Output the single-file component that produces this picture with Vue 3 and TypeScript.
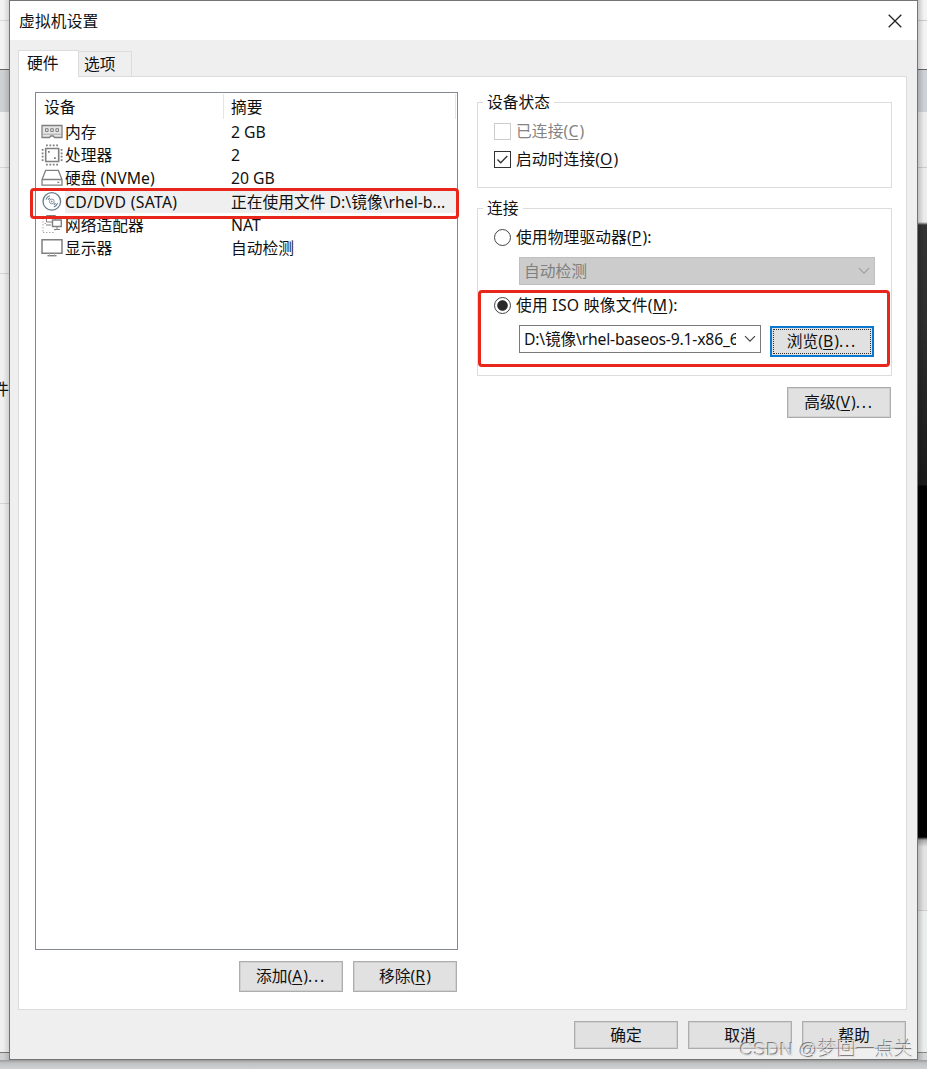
<script setup lang="ts">
import { ref } from 'vue'

type IconName = 'memory' | 'cpu' | 'disk' | 'disc' | 'network' | 'display'
interface Device {
  icon: IconName
  name: string
  summary: string
}

const devices: Device[] = [
  { icon: 'memory', name: '内存', summary: '2 GB' },
  { icon: 'cpu', name: '处理器', summary: '2' },
  { icon: 'disk', name: '硬盘 (NVMe)', summary: '20 GB' },
  { icon: 'disc', name: 'CD/DVD (SATA)', summary: '正在使用文件 D:\\镜像\\rhel-b...' },
  { icon: 'network', name: '网络适配器', summary: 'NAT' },
  { icon: 'display', name: '显示器', summary: '自动检测' },
]
const selected = ref<IconName>('disc')
</script>

<template>
  <div class="desktop">
    <div class="edge edge-left"><span class="behind">件</span></div>
    <main class="window">
      <header class="titlebar">
        <span>虚拟机设置</span>
        <svg class="close" width="14" height="14" viewBox="0 0 14 14"><path d="M.7.7l12.6 12.6M13.3.7L.7 13.3" /></svg>
      </header>
      <nav class="tabs">
        <div class="tab active">硬件</div>
        <div class="tab">选项</div>
      </nav>
      <section class="panel">
        <div class="left">
          <div class="list">
            <div class="row head"><span class="c1">设备</span><span class="c2">摘要</span></div>
            <div
              v-for="d in devices"
              :key="d.icon"
              class="row"
              :class="{ selected: selected === d.icon }"
              @click="selected = d.icon"
            >
              <svg class="icon" width="22" height="22" viewBox="0 0 22 22">
                <g v-if="d.icon === 'memory'">
                  <path d="M1 4.5h20v12h-7.5l-1.2-1.5H9.7l-1.2 1.5H1z" fill="#e6e6e6" stroke-width="1.3" />
                  <path d="M4.5 7.7h2.6v2.8H4.5zM9.7 7.7h2.6v2.8H9.7zM14.9 7.7h2.6v2.8h-2.6z" />
                  <path d="M1 13.2h20" stroke="#aaa" />
                </g>
                <g v-else-if="d.icon === 'cpu'">
                  <path d="M4.7 4.5h13v13h-13z" stroke-width="1.6" />
                  <path d="M5 1.4h12.5M5 20.6h12.5" stroke-width="1.8" stroke-dasharray="1.8 1.6" />
                  <path d="M1.6 5v12.5M20.6 5v12.5" stroke-width="1.8" stroke-dasharray="1.8 1.6" />
                  <path d="M7 7.8h1.8M13 14.2h1.8" stroke-width="1.8" />
                </g>
                <g v-else-if="d.icon === 'disk'">
                  <path d="M4.6 3.4h12.8L21 12.5v5.6H1v-5.6zM1 12.5h20" stroke-width="1.3" />
                  <path d="M16.3 15.4h2" stroke-width="1.3" />
                </g>
                <g v-else-if="d.icon === 'disc'" class="blue">
                  <circle cx="10.8" cy="10.4" r="8.8" stroke-width="1.3" />
                  <circle cx="10.8" cy="10.4" r="2.4" stroke-width=".8" />
                  <circle cx="10.8" cy="10.4" r=".4" />
                  <path d="M5 8.6A6 6 0 0 1 8.8 4.8M7.2 8.8a4.4 4.4 0 0 1 1.6-1.8M16.6 12.2a6 6 0 0 1-3.8 3.8M14.4 12a4.4 4.4 0 0 1-1.6 1.8" stroke-width="1.1" />
                </g>
                <g v-else-if="d.icon === 'network'">
                  <path d="M5.5 1.5h9v6.5h-9z" />
                  <path d="M11.5 6h8.8v6.5h-8.8z" fill="#fff" stroke-width="1.4" />
                  <path d="M2 4v14.5M2 18.5h12M5 9.5H2M14 15v3" stroke="#aaa" stroke-dasharray="1.5 1.5" />
                  <path d="M16 12.5v3M13 15.5h6M5 11h5" />
                </g>
                <g v-else>
                  <path d="M1 2.8h20v13.4H1z" stroke-width="1.5" />
                  <path d="M6.5 18.7h9" stroke-width="1.4" />
                  <path d="M8.5 16.5v2M13.5 16.5v2" stroke="#bbb" />
                </g>
              </svg>
              <span class="c1">{{ d.name }}</span>
              <span class="c2">{{ d.summary }}</span>
            </div>
            <div class="mark mark-row"></div>
          </div>
          <div class="actions">
            <button>添加(<u>A</u>)<span class="dots">...</span></button>
            <button>移除(<u>R</u>)</button>
          </div>
        </div>
        <div class="right">
          <fieldset class="status">
            <legend>设备状态</legend>
            <label class="opt disabled"><i class="box"></i>已连接(<u>C</u>)</label>
            <label class="opt">
              <i class="box"><svg width="15" height="15" viewBox="0 0 15 15"><path d="M2.5 7.4l3.2 3.3 6.6-6.6" /></svg></i>启动时连接(<u>O</u>)
            </label>
          </fieldset>
          <fieldset class="connection">
            <legend>连接</legend>
            <label class="opt physical"><i class="radio"></i>使用物理驱动器(<u>P</u>):</label>
            <div class="combo off">
              <span>自动检测</span>
              <svg width="12" height="8" viewBox="0 0 12 8"><path d="M1 1.2l5 5 5-5" /></svg>
            </div>
            <label class="opt iso"><i class="radio on"></i>使用 ISO 映像文件(<u>M</u>):</label>
            <div class="file">
              <div class="combo">
                <span>D:\镜像\rhel-baseos-9.1-x86_64</span>
                <svg width="12" height="8" viewBox="0 0 12 8"><path d="M1 1.2l5 5 5-5" /></svg>
              </div>
              <button class="focus">浏览(<u>B</u>)<span class="dots">...</span></button>
            </div>
            <div class="mark mark-iso"></div>
          </fieldset>
          <button class="advanced">高级(<u>V</u>)<span class="dots">...</span></button>
        </div>
      </section>
      <footer class="footer">
        <button>确定</button>
        <button>取消</button>
        <button>帮助</button>
      </footer>
    </main>
    <div class="edge edge-right"></div>
    <div class="below"></div>
    <div class="watermark">CSDN @梦回一点关</div>
  </div>
</template>

<style>
html,
body {
  margin: 0;
  overflow: hidden;
}
</style>

<style scoped>
* {
  box-sizing: border-box;
}
.desktop {
  position: relative;
  width: 927px;
  height: 1069px;
  display: grid;
  grid-template-columns: 9px 909px 9px;
  grid-template-rows: 1060px 9px;
  overflow: hidden;
  font: 15.75px/20px 'Noto Sans', 'Noto Sans CJK SC', sans-serif;
  color: #111;
  white-space: nowrap;
}
.edge {
  overflow: hidden;
}
.edge-left {
  padding-top: 379px;
  background: linear-gradient(to right, transparent 3px, rgba(0, 0, 0, 0.13)),
    linear-gradient(#f3f3f3 20px, #d8d8d8 20px 21px, #f3f3f3 21px 69px, #666 69px 70px, #cfd0d1 70px 112px, #f0f0f0 112px 167px, #d4d4d4 167px 168px, #f0f0f0 168px 273px, #d4d4d4 273px 274px, #f0f0f0 274px 503px, #d4d4d4 503px 504px, #f0f0f0 504px 1052px, #777 1052px 1053px, #d0d1d3 1053px);
}
.behind {
  display: block;
  margin-left: -7px;
  font-size: 16px;
}
.edge-right {
  background: linear-gradient(to left, transparent 3px, rgba(0, 0, 0, 0.18)),
    linear-gradient(#f3f3f3 20px, #ccc 20px 21px, #f3f3f3 21px 69px, #666 69px 70px, #ced1d6 70px 112px, #ececec 112px 167px, #ccc 167px 168px, #ececec 168px 222px, #333 225px, #2e2e2e 320px, #191919 485px, #000 486px 837px, #aaa 840px, #e2e2e2 847px 910px, #ccc 910px 911px, #eceded 911px 1052px, #888 1052px 1053px, #d4d5d7 1053px);
}
.below {
  grid-column: 1 / 4;
  background: linear-gradient(#999, #c0c1c3 3px, #d0d1d3);
}
.window {
  border: 1px solid #747474;
  background: #efefef;
  display: flex;
  flex-direction: column;
}
.titlebar {
  height: 39px;
  background: #fff;
  display: flex;
  justify-content: space-between;
  align-items: center;
  padding: 0 15px 0 9px;
}
.titlebar span {
  letter-spacing: 0.15px;
}
.close {
  fill: none;
  stroke: #222;
  stroke-width: 1.3;
}
.tabs {
  height: 36px;
  padding-left: 8px;
  display: flex;
  align-items: flex-end;
}
.tab {
  width: 53px;
  height: 25px;
  border: 1px solid #dcdcdc;
  border-width: 1px 1px 0 0;
  padding: 2px 0 0 5px;
}
.tab.active {
  width: 61px;
  height: 27px;
  margin-bottom: -1px;
  border-width: 1px 1px 0 1px;
  background: #fff;
  padding: 2px 0 0 8px;
  z-index: 1;
}
.panel {
  margin-left: 8px;
  width: 889px;
  height: 934px;
  background: #fff;
  border: 1px solid #dcdcdc;
  display: flex;
  padding: 15px 0 0 16px;
}
.left {
  width: 423px;
}
.list {
  position: relative;
  height: 858px;
  border: 1px solid #828790;
}
.row {
  height: 23.3px;
  display: flex;
  align-items: center;
  padding-left: 5px;
}
.head {
  height: 27px;
  padding-left: 8px;
}
.head .c1,
.head .c2 {
  height: 25px;
  line-height: 27px;
  border-right: 1px solid #e5e5e5;
}
.head .c2 {
  flex: 1;
  margin-right: 1px;
}
.icon {
  flex: none;
  margin-right: 2px;
}
.icon g {
  fill: none;
  stroke: #808080;
}
.icon g.blue {
  stroke: #647d8e;
}
.row .c1 {
  width: 159px;
}
.row.head .c1 {
  width: 180px;
}
.c2 {
  padding-left: 7px;
}
.row.selected .c1,
.row.selected .c2 {
  background: #efefef;
  height: 23px;
  line-height: 24px;
}
.row.selected .c1 {
  letter-spacing: 0.3px;
}
.row.selected .c2 {
  flex: 1;
}
.mark {
  position: absolute;
  border: 3px solid #e8261c;
  border-radius: 4px;
}
.mark-row {
  left: -6px;
  top: 95px;
  width: 429px;
  height: 31px;
}
.actions {
  display: flex;
  justify-content: flex-end;
  gap: 10px;
  margin: 11px 1px 0 0;
}
button {
  appearance: none;
  width: 104px;
  height: 31px;
  padding: 0 0 1px;
  border: 1px solid #adadad;
  outline: 1px solid #d0d0d0;
  outline-offset: -2px;
  background: #e1e1e1;
  color: #111;
  font: inherit;
  display: block;
}
.dots {
  letter-spacing: 1.8px;
}
u {
  text-decoration-thickness: 1px;
  text-underline-offset: 2px;
  padding-right: 1px;
}
.right {
  width: 415px;
  margin-left: 19px;
}
fieldset {
  position: relative;
  margin: 0;
  padding: 0 0 0 16px;
  border: 1px solid #dcdcdc;
  min-width: 0;
}
legend {
  height: 20px;
  margin-left: -11px;
  padding: 0 4px;
}
.status {
  height: 96px;
}
.status legend {
  margin-bottom: 5px;
}
.connection {
  height: 178px;
  margin-top: 10px;
}
.connection legend {
  margin-bottom: 5px;
}
.opt {
  display: flex;
  align-items: center;
  height: 28px;
  letter-spacing: 0.1px;
}
.physical {
  margin-bottom: 6px;
}
.iso {
  letter-spacing: 0.25px;
}
.opt.disabled {
  color: #848484;
}
.box {
  width: 17px;
  height: 17px;
  border: 1px solid #333;
  margin-right: 5px;
  display: flex;
}
.disabled .box {
  border-color: #ccc;
}
.box path {
  fill: none;
  stroke: #333;
  stroke-width: 1.4;
}
.radio {
  width: 17px;
  height: 17px;
  border: 1px solid #444;
  border-radius: 50%;
  margin-right: 5px;
}
.radio.on {
  background: radial-gradient(circle, #2a2a2a 4.8px, #fff 5.7px);
}
.combo {
  width: 242px;
  height: 28px;
  border: 1px solid #7a7a7a;
  display: flex;
  align-items: center;
  padding: 0 4px 0 4px;
  background: #fff;
}
.combo span {
  flex: 1;
  min-width: 0;
  overflow: hidden;
  margin-right: 8px;
}
.file .combo span {
  letter-spacing: -0.2px;
}
.combo path {
  fill: none;
  stroke: #444;
  stroke-width: 1.2;
}
.combo.off {
  width: 356px;
  margin: 0 0 6px 25px;
  background: #ccc;
  border-color: #bfbfbf;
  color: #808080;
}
.combo.off path {
  stroke: #a0a0a0;
}
.file {
  display: flex;
  gap: 9px;
  margin: 6px 0 0 25px;
}
.focus {
  margin-top: 1px;
  border: 2px solid #0878d0;
  outline: 1px dotted #333;
  outline-offset: -4px;
}
.mark-iso {
  left: 0;
  top: 67px;
  width: 412px;
  height: 77px;
}
.mark-iso {
  margin-top: 0;
}
.advanced {
  margin: 11px 1px 0 auto;
}
.footer {
  display: flex;
  justify-content: flex-end;
  gap: 10px;
  padding: 11px 11px 0 0;
}
.footer button {
  height: 28px;
  padding: 0;
}
.watermark {
  position: absolute;
  left: 740px;
  top: 1039px;
  font: 300 19px/22px 'Liberation Sans', 'Noto Sans CJK SC', sans-serif;
  color: rgba(225, 225, 225, 0.9);
  text-shadow: -1px -1px 0 rgba(90, 90, 90, 0.75);
}
</style>
